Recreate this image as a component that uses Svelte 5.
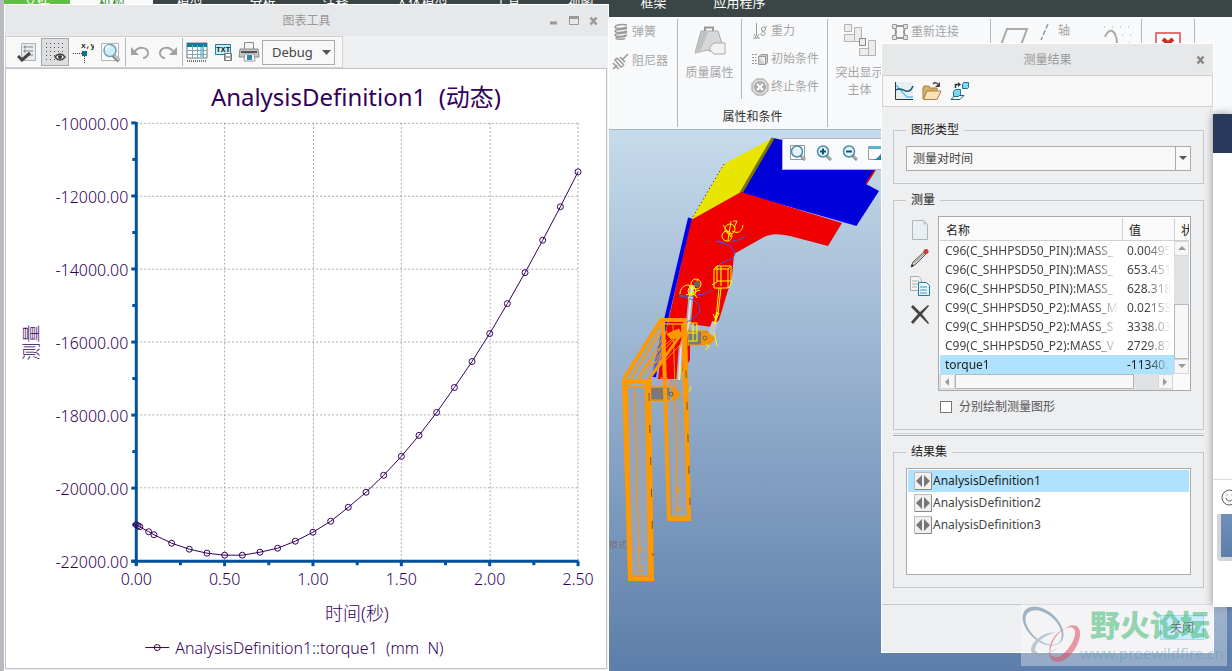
<script>
  const tabs = ['文件', '机构', '模型', '分析', '注释', '人体模型', '工具', '视图', '框架', '应用程序'];

  // time (s), torque (mm N)
  const points = [
    [0, -21002], [0.01, -21030], [0.02, -21057], [0.07, -21194], [0.1, -21276],
    [0.2, -21508], [0.3, -21672], [0.4, -21781], [0.5, -21836], [0.6, -21836],
    [0.7, -21754], [0.8, -21645], [0.9, -21453], [1.0, -21207], [1.1, -20907],
    [1.2, -20524], [1.3, -20114], [1.4, -19649], [1.5, -19130], [1.6, -18556],
    [1.7, -17927], [1.8, -17244], [1.9, -16533], [2.0, -15768], [2.1, -14948],
    [2.2, -14100], [2.3, -13212], [2.4, -12296], [2.5, -11340]
  ];

  const xTicks = [0, 0.5, 1, 1.5, 2, 2.5];
  const yTicks = [-10000, -12000, -14000, -16000, -18000, -20000, -22000];

  const px = (t) => 130 + t * 177;
  const py = (v) => 54 + ((-10000 - v) / 12000) * 439;

  const line = points.map(([t, v]) => `${px(t).toFixed(1)},${py(v).toFixed(1)}`).join(' ');

  const measures = [
    { name: 'C96(C_SHHPSD50_PIN):MASS_', value: '0.00495' },
    { name: 'C96(C_SHHPSD50_PIN):MASS_', value: '653.451' },
    { name: 'C96(C_SHHPSD50_PIN):MASS_', value: '628.318' },
    { name: 'C99(C_SHHPSD50_P2):MASS_M', value: '0.02153' },
    { name: 'C99(C_SHHPSD50_P2):MASS_S', value: '3338.03' },
    { name: 'C99(C_SHHPSD50_P2):MASS_V', value: '2729.87' },
    { name: 'torque1', value: '-11340.' }
  ];
  let activeMeasure = $state(6);

  const results = ['AnalysisDefinition1', 'AnalysisDefinition2', 'AnalysisDefinition3'];
  let activeResult = $state('AnalysisDefinition1');

  let separate = $state(false);
</script>

{#snippet lens(sign)}
  <svg width="20" height="20" viewBox="0 0 20 20" fill="none">
    {#if sign === 'fit'}<path d="M2.500 1.500h14v14h-14z" fill="#fff" stroke="#999" />{/if}
    <path d="M12.500 11.500l4.500 4.500" stroke="#888" stroke-width="3" />
    <path d="M13.500 12l4 4" stroke="#ddd" />
    <circle cx="9" cy="7.500" r="5.500" fill="#e4f4fa" stroke="#4c8da5" stroke-width="1.500" />
    {#if sign === 'in' || sign === 'out'}<path d="M6 7.500h6" stroke="#0b5873" stroke-width="2" />{/if}
    {#if sign === 'in'}<path d="M9 4.500v6" stroke="#0b5873" stroke-width="2" />{/if}
  </svg>
{/snippet}

<div class="desktop">
  <nav class="tabs">
    {#each tabs as tab, i}
      <a href="#tab{i}" class:file={i === 0} class:current={i === 1} class:wide={tab.length > 2}>{tab}</a>
    {/each}
  </nav>

  <div class="ribbon">
    <div class="group stack first">
      <button>
        <svg width="18" height="18" viewBox="0 0 18 18" fill="none" stroke="#999" stroke-width="1.500">
          <path d="M15 2C10 .8 3 2 3 4s8 2 12 0M15 5.500C10 7 3 6 3 8s8 2 12 0M15 9.500C10 11 3 10 3 12s8 2 12 0M14 13C10 14.500 4 13.500 4 15.500c1 1 6 1 9 0" />
        </svg>
        弹簧
      </button>
      <button>
        <svg width="18" height="18" viewBox="0 0 18 18" fill="none" stroke="#999" stroke-width="1.500">
          <path d="M10 8l6-6M5 6l7 7M5 6L3 8l6 7 3-2M1 11l6 6M1 17l4-4M8 5l5 5" />
        </svg>
        阻尼器
      </button>
    </div>
    <div class="pair">
      <div class="pair-row">
        <button class="big">
          <svg width="34" height="32" viewBox="0 0 34 32">
            <path d="M12 7V2.500h8V7" fill="none" stroke="#999" stroke-width="2" />
            <path d="M8 6h17l6 19-8 3-9-3-12 3z" fill="#d7d8d9" stroke="#aaa" />
            <path d="M9 7h6L8 25l-6 2z" fill="#bfc0c1" />
            <path d="M17 22l4-4h11v11H21l-4-4z" fill="#f3f3f3" stroke="#aaa" />
          </svg>
          <span>质量属性</span>
        </button>
        <div class="group stack conditions">
          <button>
            <svg width="18" height="18" viewBox="0 0 18 18" fill="none" stroke="#999">
              <path d="M5.500 1v13M2 16h7M3 12l2.500 4L8 12" />
              <circle cx="12.500" cy="7" r="2" /><path d="M11 9.500c4 0 4 4 1 4s-2-2.500-.5-3M14 5.500l2-1" />
            </svg>
            重力
          </button>
          <button>
            <svg width="18" height="18" viewBox="0 0 18 18" fill="none" stroke="#999">
              <path d="M1 4.500h6M1 7.500h4M1 10.500h5M1 13.500h5" stroke-dasharray="2 1" />
              <path d="M7.500 6.500l3-2h6v8l-2 2h-7z" fill="#ccc" /><path d="M7.500 6.500h7v8" fill="#eee" />
            </svg>
            初始条件
          </button>
          <button>
            <svg width="18" height="18" viewBox="0 0 18 18">
              <path d="M5.500 1h7L17 5.500v7L12.500 17h-7L1 12.500v-7z" fill="#ddd" stroke="#999" />
              <circle cx="9" cy="9" r="6" fill="#aaa" /><path d="M6 6l6 6M12 6l-6 6" stroke="#fff" stroke-width="2" />
            </svg>
            终止条件
          </button>
        </div>
      </div>
      <div class="caption">属性和条件</div>
    </div>
    <button class="big bodies">
      <svg width="34" height="34" viewBox="0 0 34 34" fill="#ececec" stroke="#b2b2b2">
        <path d="M1.500 1.500h7v7h-7zM1.500 11.500h10v7h-10zM11.500 4.500h7v14h-7zM16.500 25.500h9v7h-9zM25.500 17.500h7v15h-7z" />
        <path d="M16.500 15.500h6v7h-6z" stroke="#888" />
      </svg>
      <span>突出显示<br />主体</span>
    </button>
    <div class="group stack reconnect">
      <button>
        <svg width="18" height="18" viewBox="0 0 18 18" fill="#e4e4e4" stroke="#999">
          <path d="M4 3h10l-1 6 1 6H4l1-6z" fill="none" stroke-width="2" />
          <path d="M1.500 1.500h4v4h-4zM12.500 1.500h4v4h-4zM1.500 12.500h4v4h-4zM12.500 12.500h4v4h-4z" />
        </svg>
        重新连接
      </button>
    </div>
    <div class="datum">
      <svg width="30" height="24" viewBox="0 0 30 24" fill="none" stroke="#aaa" stroke-width="2"><path d="M2 22L8 6h20l-6 16z" /></svg>
      <svg width="12" height="18" viewBox="0 0 12 18" stroke="#999" stroke-width="1.500"><path d="M9 1L2 17" stroke-dasharray="5 2" /></svg>
      <span>轴</span>
      <svg class="curve" width="28" height="24" viewBox="0 0 28 24" fill="none" stroke="#aaa" stroke-width="2">
        <path d="M2 14C6 4 13 6 14 20v4" /><path d="M1 4h26M11 12h17M25 20h3" stroke-width="1" stroke-dasharray="1 7" />
      </svg>
    </div>
    <div class="shut">
      <svg width="26" height="26" viewBox="0 0 26 26"><path d="M1 1h24v24H1z" fill="#fff" stroke="#e24444" stroke-width="1.500" /><path d="M8 7l10 9M18 7L8 16" stroke="#c92b2b" stroke-width="4" /></svg>
    </div>
  </div>

  <main class="viewport">
    <svg class="model" width="273" height="541" viewBox="609 130 273 541" fill="none">
      <path d="M773 138L882 160v8l-7 2-9 14 13 7-22 34-116-32z" fill="#0000d8" />
      <path d="M741 192l116 33" stroke="#0000ff" stroke-width="2" />
      <path d="M875 170l-9 14" stroke="#d00" stroke-width="1.500" />
      <path d="M773 138l-49 26-33 56 50-27z" fill="#e8e600" />
      <path d="M724 164l-33 56" stroke="#0000a8" stroke-dasharray="1 3" />
      <path d="M773 138l-32 55" stroke="#7b7700" stroke-width="3" />
      <path d="M691 220l50-28 101 31-14 23-38-10c-12-2-17-3-26 1l-30 17-2 23-13 43-7 7-22-3v36l-13 19h-19l3-25z" fill="#f00000" />
      <path d="M690 218l-24 102-10 45-2 12" stroke="#0000ee" stroke-width="4" />
      <path d="M710 272l-10 30-5 24" stroke="#900" stroke-dasharray="1 4" />
      <path d="M692 285l-4 42-7 22-3 42" stroke="#a9aabc" stroke-width="5" />
      <path d="M692 285l-4 42-7 22-3 42" stroke="#dcdde8" stroke-width="2" />
      <path d="M715 322l-5 14" stroke="#c2c4d2" stroke-width="6" />
      <path d="M650 387h24v14h-24zM688 331h20v14h-20z" fill="#77797c" stroke="#ff9900" />

      <g stroke="#2f62ee">
        <path d="M716 241c10 2 25 0 29-5M716 241c22 5 24 16 10 20-12 4-7 8-5 15M679 295c10 3 27 0 32-5M679 296c25 4 28 17 6 27" />
      </g>
      <g stroke="#ffff00">
        <circle cx="730" cy="229" r="5" /><circle cx="727" cy="236" r="5" /><path d="M723 225l8 12M733 221h4l-3 7M743 225c-1 7-5 9-11 6M728 240l3-19" />
        <path d="M714 269h14v19h-14zM714 269l3-3h14l-3 3M731 266v19l-3 3M717 266v16l-5 3M717 281h14M719 288l-3 31M721 288l-3 26M713 314l3 6 3-7M721 266v20" />
        <circle cx="696" cy="284" r="5" /><circle cx="692" cy="291" r="4" /><path d="M680 294c0-5 3-9 9-9l8 13M700 290l-14 5M688 299l10-20" />
        <path d="M688 323h9v18h-9M688 333h9M693 323v18M714 332l3 14M705 344l4 2-3 4M681 365l-2 21M691 386c-1 7-5 9-12 6" />
        <path d="M717 312l-2 12" stroke-width="2" />
      </g>
      <circle cx="697" cy="284" r="3" fill="#666" />

      <path d="M661 319l-38 60h28l12-16v-43z" fill="#98a3b5" fill-opacity=".6" />
      <g stroke="#ff9900">
        <path d="M661 320l-37 59" stroke-width="4" />
        <path d="M682 333l-33 46" stroke-width="3" />
        <path d="M664 328l-34 51M666 340l-28 38" stroke-width="2" stroke-dasharray="4 1" />
        <path d="M662 324l-30 54M667 331l-30 48M665 351l-25 28M683 342l-28 29M680 333l-24 25M644 366l20-6M660 349l22-18" />
        <path d="M667 334l12-5 2 8-10 2z" fill="#ff9900" />
      </g>
      <path d="M669 380h13l6 136h-16z" fill="#98a3b5" />
      <path d="M626 385h21l3 191h-19z" fill="#98a3b5" />
      <g stroke="#ff9900">
        <path d="M663 320h22l4 199h-20z" stroke-width="4" />
        <path d="M664 378l6 138M682 324l6 192" stroke-width="2" />
        <path d="M624 381h25l3 198h-22z" stroke-width="4" />
        <path d="M626 381l5 195M646 381l4 196" stroke-width="3" />
        <path d="M663 324h22M670 516h18M624 386h25M631 576h20" stroke-width="1.500" />
        <path d="M673 325l3 95 2 96M635 385l2 100 3 90M650 387h25v13h-25" />
        <path d="M628 390c0-10 16-10 16 0M641 378l5 8M660 378h7l5 8-4 12" />
        <circle cx="678" cy="490" r="2" /><circle cx="678" cy="509" r="2" /><circle cx="640" cy="549" r="2" /><circle cx="641" cy="569" r="2" />
      </g>
      <path d="M701 331l8 2 6 5-4 6-10 1zM672 388l6 2 2 4-2 5-6 1z" fill="#f79200" />
      <circle cx="705" cy="338" r="2" stroke="#666" /><circle cx="671" cy="394" r="2" stroke="#555" />
      <path d="M686 370l4 135M649 393l4 163" stroke="#665b42" stroke-dasharray="8 24" />
    </svg>
    <span class="mode">模式</span>
    <div class="view-tools">
      <button aria-label="重新调整">{@render lens('fit')}</button>
      <button aria-label="放大">{@render lens('in')}</button>
      <button aria-label="缩小">{@render lens('out')}</button>
      <button aria-label="重画">
        <svg width="20" height="20" viewBox="0 0 20 20"><path d="M2.500 2.500h15v13h-15z" fill="#fff" stroke="#999" /><path d="M3 2h14v3H3z" fill="#58b4cc" /><path d="M7 16c4-1 8-5 10-10v10z" fill="#2687a6" /></svg>
      </button>
    </div>
  </main>

  <section class="window chart-window">
    <header class="titlebar">
      <span>图表工具</span>
      <div class="controls">
        <button aria-label="最小化"><svg width="10" height="10" viewBox="0 0 10 10"><path d="M1 7h7" stroke="#999" stroke-width="3" /></svg></button>
        <button aria-label="最大化"><svg width="10" height="10" viewBox="0 0 10 10"><path d="M0 1.500h10" stroke="#999" stroke-width="3" /><path d="M.5 1.500h9v7h-9z" fill="none" stroke="#999" /></svg></button>
        <button aria-label="关闭窗口"><svg width="10" height="10" viewBox="0 0 10 10"><path d="M1.500 1.500l6 7M7.500 1.500l-6 7" stroke="#999" stroke-width="2.500" /></svg></button>
      </div>
    </header>
    <div class="toolbar">
      <button aria-label="格式">
        <svg width="20" height="20" viewBox="0 0 20 20" fill="none"><path d="M4.500 1.500h14v17h-14z" fill="#e4eaee" stroke="#adb3b8" /><circle cx="8" cy="5" r="1" stroke="#777" /><circle cx="8" cy="9" r="1" stroke="#777" /><path d="M10 5h6M10 9h6M11 13h5" stroke="#888" /><path d="M1 14l4 4 8-7" stroke="#444" stroke-width="3" /></svg>
      </button>
      <button class="pressed" aria-label="网格">
        <svg width="22" height="22" viewBox="0 0 22 22" fill="none"><path d="M2 2.500h18M2 6.500h18M2 10.500h18M2 14.500h9M2 18.500h9" stroke="#555" stroke-dasharray="1 3" /><path d="M11 16c3-4 7-4 10 0-3 4-7 4-10 0z" fill="#fff" stroke="#444" stroke-width="1.500" /><circle cx="16" cy="16" r="2" fill="#333" /></svg>
      </button>
      <button aria-label="坐标">
        <svg width="22" height="22" viewBox="0 0 22 22"><path d="M1 12.500h9M12.500 15v7" stroke="#333" stroke-dasharray="1 1" /><path d="M10 10h5v5h-5z" fill="#11708e" /><text x="9" y="7">x,y</text></svg>
      </button>
      <button aria-label="缩放">
        <svg width="22" height="22" viewBox="0 0 22 22"><path d="M1.500 2.500h17v17h-17z" fill="#fafafa" stroke="#b5b5b5" /><path d="M13 14l6 6" stroke="#888" stroke-width="4" /><path d="M14 14l5 5" stroke="#ddd" stroke-width="1.500" /><circle cx="10" cy="9.500" r="6" fill="#ccedf8" stroke="#6d9eb0" stroke-width="1.500" /><path d="M6 9c0-3 2-4 4-4" fill="none" stroke="#fff" stroke-width="2" /></svg>
      </button>
      <i></i>
      <button aria-label="撤消">
        <svg width="20" height="20" viewBox="0 0 20 20" fill="none"><path d="M4 11c4-8 15-6 14 1-1 3-3 4-5 4" stroke="#a2a2a2" stroke-width="2" /><path d="M1 5v8h8z" fill="#a2a2a2" /></svg>
      </button>
      <button aria-label="重做">
        <svg width="20" height="20" viewBox="0 0 20 20" fill="none"><path d="M16 11C12 3 1 5 2 12c1 3 3 4 5 4" stroke="#a2a2a2" stroke-width="2" /><path d="M19 5v8h-8z" fill="#a2a2a2" /></svg>
      </button>
      <i></i>
      <button class="narrow" aria-label="表">
        <svg width="22" height="22" viewBox="0 0 22 22" fill="none"><path d="M1 2h20v15H1z" fill="#fff" stroke="#777" /><path d="M1 2h20v4H1z" fill="#147a9b" /><path d="M14 6h4v11h-4z" fill="#83d4ed" /><path d="M1 9.500h20M1 13.500h20M6.500 4v13M11.500 4v13M17.500 4v13" stroke="#83a3af" /><path d="M1 20h20" stroke="#777" stroke-width="2" stroke-dasharray="1 1" /></svg>
      </button>
      <button class="narrow" aria-label="文本">
        <svg width="20" height="20" viewBox="0 0 20 20"><path d="M2.500 2.500h15v10h-15z" fill="#c3edfa" stroke="#237f99" /><text x="3" y="10">TXT</text><path d="M11.500 11.500h7v7h-7z" fill="#aaa" stroke="#777" /><path d="M13 12h4v2h-4zM13 16h4v2h-4z" fill="#fff" /></svg>
      </button>
      <button class="narrow" aria-label="打印">
        <svg width="22" height="22" viewBox="0 0 22 22"><path d="M6.500 1.500h9v7h-9z" fill="#f5f5f5" stroke="#888" /><path d="M2 8h18l1 8H1z" fill="#c4c8cb" stroke="#888" /><path d="M3 11h16" stroke="#555" stroke-width="2" /><path d="M7 13h9l1 7H6z" fill="#fff" stroke="#999" /><path d="M9 14h5v5H9z" fill="#3188a8" /></svg>
      </button>
      <div class="drop debug">
        <select aria-label="模式"><option>Debug</option></select>
        <svg width="9" height="6" viewBox="0 0 9 6"><path d="M0 0h9L4.500 5z" fill="#555" /></svg>
      </div>
    </div>

    <div class="plot">
      <svg viewBox="0 0 600 600" role="img" aria-label="AnalysisDefinition1 (动态)">
        <text class="title" x="350" y="37">AnalysisDefinition1&nbsp; (动态)</text>

        <g class="grid">
          {#each yTicks.slice(0, -1) as v}<line x1="130" x2="573" y1={Math.floor(py(v)) + 0.5} y2={Math.floor(py(v)) + 0.5} />{/each}
          {#each xTicks.slice(1) as t}<line x1={Math.floor(px(t)) + 0.5} x2={Math.floor(px(t)) + 0.5} y1="54" y2="493" />{/each}
        </g>

        <g class="axis">
          <path d="M130 53v444M125 493h448" />
          {#each yTicks as v}<line x1="125" x2="130" y1={py(v)} y2={py(v)} />{/each}
          {#each yTicks.slice(1) as v}<line x1="126" x2="130" y1={py(v + 1000)} y2={py(v + 1000)} />{/each}
          {#each xTicks as t}<line x1={px(t)} x2={px(t)} y1="493" y2="498" />{/each}
          {#each xTicks.slice(1) as t}<line x1={px(t - 0.25)} x2={px(t - 0.25)} y1="493" y2="497" />{/each}
        </g>

        {#each yTicks as v}<text class="label end" x="122" y={py(v) + 7}>{v.toFixed(2)}</text>{/each}
        {#each xTicks as t}<text class="label" x={px(t)} y="517">{t.toFixed(2)}</text>{/each}

        <polyline class="curve" points={line} />
        {#each points as [t, v]}<circle class="curve" cx={px(t)} cy={py(v)} r="3" />{/each}

        <text class="name" x="351" y="552">时间(秒)</text>
        <text class="name" x="-274" y="32" transform="rotate(-90)">测量</text>

        <path class="curve" d="M139 579.500h24" /><circle class="curve" cx="151" cy="579.500" r="3" />
        <text class="label start" x="169" y="586">AnalysisDefinition1::torque1&nbsp; (mm&nbsp; N)</text>
      </svg>
    </div>
  </section>

  <section class="window dialog">
    <header class="titlebar">
      <span>测量结果</span>
      <div class="controls">
        <button aria-label="关闭对话框"><svg width="10" height="10" viewBox="0 0 10 10"><path d="M1.500 1.500l6 7M7.500 1.500l-6 7" stroke="#888" stroke-width="2.500" /></svg></button>
      </div>
    </header>
    <div class="toolbar">
      <button aria-label="绘制图形">
        <svg width="20" height="20" viewBox="0 0 20 20" fill="none"><path d="M1 1h18v17H1z" fill="#e9eef1" /><path d="M2 4l7 8 4 4h6" stroke="#5cc3ee" stroke-width="1.500" /><path d="M2 9c5-4 9 3 13 1 2-1 3-2 4-5" stroke="#155672" stroke-width="1.500" /><path d="M1.500 1v17.500H19" stroke="#333" /></svg>
      </button>
      <button aria-label="打开">
        <svg width="20" height="20" viewBox="0 0 20 20"><path d="M1 7l1-2h5l1 2h7v11H1z" fill="#d6ad6b" stroke="#a8803f" /><path d="M5 10h14l-4 8.500H1.500z" fill="#fbe3b8" stroke="#a8803f" /><path d="M11 3c2-2 4-1 5 0" fill="none" stroke="#444" stroke-width="1.500" /><path d="M18 1v5h-5z" fill="#444" /></svg>
      </button>
      <button aria-label="捕捉">
        <svg width="20" height="20" viewBox="0 0 20 20"><path d="M1 18.500l4-4h9l-4 4z" fill="#fff" stroke="#1b5d8a" /><path d="M3.500 10.500l2-2h5v5l-2 2h-5zM12.500 3.500l1-2h5v5l-1 1h-5z" fill="#7fd5f0" stroke="#1d7797" /><path d="M5.500 7V3.500H9" fill="none" stroke="#333" stroke-width="1.500" /><path d="M8 1l3 2.500L8 6z" fill="#333" /></svg>
      </button>
    </div>

    <fieldset>
      <legend>图形类型</legend>
      <div class="drop type">
        <select aria-label="图形类型"><option>测量对时间</option></select>
        <svg width="8" height="5" viewBox="0 0 8 5"><path d="M0 0h8L4 4z" fill="#555" /></svg>
      </div>
    </fieldset>

    <fieldset>
      <legend>测量</legend>
      <div class="measures">
        <div class="side">
          <button aria-label="新建"><svg width="20" height="22" viewBox="0 0 20 22"><path d="M2.500 1.500h11l4 4v15h-15z" fill="#e9eff2" stroke="#b0b5b8" /><path d="M13.500 1.500v4h4z" fill="#bfc9ce" /></svg></button>
          <button aria-label="编辑"><svg width="20" height="20" viewBox="0 0 20 20"><path d="M1 19l2-5L14 4l2 2L6 16z" fill="#e8dfd5" stroke="#555" /><path d="M4 15L15 5" stroke="#8f8277" /><circle cx="16" cy="3.500" r="2.500" fill="#c93d3d" /><path d="M1 19l1-3 2 2z" fill="#222" /></svg></button>
          <button aria-label="复制"><svg width="20" height="20" viewBox="0 0 20 20"><path d="M.5.5h8l3 3v11H.5z" fill="#f4f4f4" stroke="#aaa" /><path d="M2 5h7M2 8h7M2 11h5" stroke="#aaa" /><path d="M8.500 6.500h8l3 3v10h-11z" fill="#e7f6fc" stroke="#167ca5" /><path d="M10 11h7M10 14h7M10 17h7" stroke="#3e97ba" /></svg></button>
          <button aria-label="删除"><svg width="20" height="20" viewBox="0 0 20 20" fill="#444"><path d="M1 3l2-2 7 7 8-7 1 1-7 8 7 9-1 1-8-8-7 8-2-2 7-8z" /></svg></button>
        </div>
        <div class="grid-box">
          <table>
            <thead><tr><th class="c-name">名称</th><th class="c-value">值</th><th>状</th></tr></thead>
            <tbody>
              {#each measures as m, i}
                <tr class:active={activeMeasure === i} onclick={() => (activeMeasure = i)}>
                  <td><span>{m.name}</span></td>
                  <td><span>{m.value}</span></td>
                  <td></td>
                </tr>
              {/each}
            </tbody>
          </table>
          <div class="vscroll">
            <b><svg width="8" height="5" viewBox="0 0 8 5"><path d="M0 4l4-4 4 4z" /></svg></b>
            <div class="thumb"></div>
            <b><svg width="8" height="5" viewBox="0 0 8 5"><path d="M0 0h8L4 4z" /></svg></b>
          </div>
          <div class="hscroll">
            <b><svg width="5" height="8" viewBox="0 0 5 8"><path d="M4 0v8L0 4z" /></svg></b>
            <div class="thumb"></div>
            <b><svg width="5" height="8" viewBox="0 0 5 8"><path d="M0 0v8l4-4z" /></svg></b>
          </div>
          <label class="check"><input type="checkbox" bind:checked={separate} />分别绘制测量图形</label>
        </div>
      </div>
    </fieldset>

    <hr />

    <fieldset>
      <legend>结果集</legend>
      <div class="results">
        {#each results as r}
          <button class:active={activeResult === r} onclick={() => (activeResult = r)}>
            <svg width="18" height="18" viewBox="0 0 18 18"><path d="M.5.5h17v17H.5z" fill="#f0f0f0" stroke="#bbb" /><path d="M17.500 1v16.500H1" fill="none" stroke="#888" /><path d="M8 3v12L2 9zM10 3v12l6-6z" fill="#777" /></svg>{r}
          </button>
        {/each}
      </div>
    </fieldset>

    <footer><button>关闭</button></footer>
  </section>

  <aside class="chat">
    <div class="chat-head"></div>
    <div class="chat-log"></div>
    <div class="chat-input">
      <svg width="17" height="17" viewBox="0 0 17 17" fill="none" stroke="#555"><circle cx="8.500" cy="8.500" r="7.500" /><path d="M5 9c1 4 6 4 7 0M6 5.500v1M11 5.500v1" /></svg>
      <div class="thumbnail"></div>
    </div>
  </aside>

  <div class="watermark">
    <svg width="66" height="62" viewBox="0 0 66 62" fill-rule="evenodd">
      <path transform="translate(22 22) rotate(42)" d="M-24 0a24 15 0 0 1 48 0a24 15 0 0 1-48 0zM-20 1a21 12 0 0 0 43 0a21 13 0 0 0-43 0z" fill="#5f7f9a" />
      <path transform="translate(26 41) rotate(-28)" d="M-17 0a17 10 0 0 1 30-7a17 9 0 0 0-26 7a16 8 0 0 0 22 7a17 10 0 0 1-26-7z" fill="#8fa3b5" />
      <path d="M44 25c6-6 16-5 15 6-1 12-12 26-22 27-6 0-9-5-9-10 3 6 8 7 14 2 8-7 13-17 12-23-1-4-5-5-10-2zM45 24c-8 4-15 13-16 25-3-8 6-22 16-25z" fill="#dc4f5e" />
    </svg>
    <div>
      <strong>野火论坛</strong>
      <span>www.proewildfire.cn</span>
    </div>
  </div>
</div>

<style>
  :global(body) {
    margin: 0;
    overflow: hidden;
    font: 12px/16px 'Noto Sans', 'Noto Sans CJK SC', sans-serif;
    color: #444;
  }

  .desktop {
    position: relative;
    height: 100vh;
    overflow: hidden;
    display: flex;
    flex-direction: column;
    box-sizing: border-box;
    border-left: 4px solid #b9babf;
    background: #3c4546;
  }

  button {
    font: inherit;
    color: inherit;
    background: none;
    border: 0;
    padding: 0;
    display: flex;
    align-items: center;
    justify-content: center;
  }

  svg {
    flex: none;
  }

  /* menu tabs */
  .tabs {
    display: flex;
    margin-top: -12px;
    height: 29px;
    flex: none;
  }

  .tabs a {
    width: 73px;
    line-height: 29px;
    text-align: center;
    font-size: 13px;
    color: #fff;
    text-decoration: none;
  }

  .tabs a.file {
    width: 66px;
    background: #5fc044;
  }

  .tabs a.current {
    width: 83px;
    background: #f7f9fb;
    color: #3c8a2d;
  }

  .tabs a.wide {
    width: 99px;
  }

  /* ribbon */
  .ribbon {
    flex: none;
    display: flex;
    height: 113px;
    box-sizing: border-box;
    padding-left: 605px;
    border-bottom: 1px solid #a5b6c4;
    background: #f7f9fb;
    color: #a6a6a6;
  }

  .ribbon > * {
    margin: 2px 0;
    box-sizing: border-box;
    flex: none;
  }

  .stack {
    display: flex;
    flex-direction: column;
    gap: 4px;
  }

  .stack button {
    height: 25px;
    gap: 2px;
    justify-content: flex-start;
  }

  .first {
    width: 69px;
    padding-left: 3px;
    border-right: 1px solid #b4b8bb;
  }

  .pair {
    width: 150px;
    border-right: 1px solid #b4b8bb;
  }

  .pair-row {
    display: flex;
    height: 80px;
  }

  .big {
    flex-direction: column;
    justify-content: flex-start;
    width: 63px;
    gap: 7px;
    padding-top: 6px;
  }

  .big span {
    line-height: 17px;
  }

  .conditions {
    border-left: 1px solid #b4b8bb;
    padding-left: 9px;
    flex: 1;
  }

  .caption {
    text-align: center;
    padding-top: 10px;
    color: #333;
  }

  .bodies {
    padding-top: 4px;
  }

  .reconnect {
    width: 100px;
    border-right: 1px solid #b4b8bb;
  }

  .datum {
    display: flex;
    width: 151px;
    padding: 4px 0 0 8px;
    border-right: 1px solid #b4b8bb;
    align-items: flex-start;
  }

  .datum svg:nth-child(2) {
    margin: 0 7px 0 10px;
  }

  .datum .curve {
    margin-left: 33px;
  }

  .shut {
    width: 53px;
    padding: 13px 0 0 13px;
    border-right: 1px solid #b4b8bb;
  }

  /* 3d view */
  .viewport {
    position: relative;
    flex: 1;
    min-height: 0;
    overflow: hidden;
    padding-left: 605px;
    background: linear-gradient(#c6dbeb, #5d7daa);
  }

  .mode {
    position: absolute;
    left: 605px;
    top: 407px;
    font-size: 9px;
    color: #777;
  }

  .view-tools {
    position: absolute;
    left: 778px;
    top: 8px;
    display: flex;
    gap: 6px;
    padding: 5px;
    border: 1px solid #b4b4b4;
    background: #f8fafc;
  }

  /* floating windows */
  .window {
    position: absolute;
    display: flex;
    flex-direction: column;
    box-sizing: border-box;
    background: #eeeff1;
    border: 1px solid #fff;
  }

  .titlebar {
    position: relative;
    flex: none;
    height: 31px;
    line-height: 32px;
    text-align: center;
    background: #e6e8ea;
    color: #999;
  }

  .controls {
    position: absolute;
    right: 9px;
    top: 11px;
    display: flex;
    gap: 10px;
  }

  .dialog .controls {
    right: 7px;
  }

  .toolbar {
    display: flex;
    align-items: center;
    height: 32px;
    box-sizing: border-box;
    border: 1px solid #cfd2d5;
    background: #f8f8f8;
  }

  .toolbar button {
    width: 28px;
    height: 28px;
  }

  .toolbar text {
    font: bold 8px 'Liberation Mono', monospace;
    fill: #222;
  }

  .toolbar i {
    width: 1px;
    height: 28px;
    background: #b6b8ba;
  }

  .toolbar .pressed {
    box-sizing: border-box;
    border: 1px solid #a6a8aa;
    background: #dcdee0;
  }

  .toolbar .narrow {
    width: 26px;
  }

  .drop {
    position: relative;
  }

  .drop select {
    appearance: none;
    width: 100%;
    height: 25px;
    border: 1px solid #a9abad;
    border-radius: 0;
    background: #f8f8f8;
    font: inherit;
    color: #444;
  }

  .drop svg {
    position: absolute;
    right: 4px;
    top: 10px;
    pointer-events: none;
  }

  .debug {
    width: 73px;
    font-size: 13px;
  }

  .debug select {
    padding: 0 9px;
  }

  .chart-window {
    left: 0;
    top: 4px;
    bottom: 0;
    width: 605px;
  }

  .chart-window .toolbar {
    align-self: flex-start;
    width: 338px;
    padding-left: 7px;
  }

  .chart-window .toolbar i + .narrow {
    margin-left: 1px;
  }

  .plot {
    flex: 1;
    min-height: 0;
    margin: 0 1px 1px 0;
    border: 1px solid #c0c3c8;
    background: #fff;
  }

  .plot svg {
    display: block;
    width: 100%;
    height: 100%;
  }

  .plot text {
    fill: #33005c;
    text-anchor: middle;
    font-weight: 300;
  }

  .plot .title {
    font-size: 24px;
    font-weight: 400;
  }

  .plot .label {
    font-size: 16px;
  }

  .plot .name {
    font-size: 18px;
  }

  .plot .end {
    text-anchor: end;
  }

  .plot .start {
    text-anchor: start;
  }

  .grid line {
    stroke: #aaa;
    stroke-dasharray: 2 2;
  }

  .axis {
    stroke: #00529c;
    stroke-width: 3;
  }

  .plot .curve {
    fill: none;
    stroke: #33005c;
  }

  /* measure results */
  .dialog {
    right: 18px;
    top: 43px;
    width: 333px;
    height: 610px;
  }

  .dialog .toolbar {
    padding-left: 7px;
  }

  fieldset {
    margin: 8px 9px 0 11px;
    padding: 8px 12px 12px;
    border: 1px solid #c3c6ca;
    min-width: 0;
  }

  .toolbar + fieldset {
    margin-top: 15px;
  }

  legend {
    margin-left: 0;
    padding: 0 5px;
    color: #222;
  }

  .type select {
    display: block;
    padding: 0 6px;
  }

  .type::after {
    content: '';
    position: absolute;
    right: 15px;
    top: 0;
    width: 1px;
    height: 25px;
    background: #a9abad;
  }

  .measures {
    display: flex;
  }

  .side {
    width: 32px;
    flex: none;
  }

  .side button {
    width: 28px;
    height: 28px;
  }

  .grid-box {
    position: relative;
    flex: 1;
    min-width: 0;
  }

  table {
    width: 100%;
    table-layout: fixed;
    border-collapse: separate;
    border-spacing: 0;
    border: 1px solid #a6a9ac;
    border-bottom: 0;
    background: #fff;
    padding: 1px 1px 0;
  }

  th {
    height: 23px;
    box-sizing: border-box;
    padding: 3px 6px 0;
    overflow: hidden;
    text-align: left;
    font-weight: 400;
    white-space: nowrap;
    color: #222;
    background: #fafafa;
    border-bottom: 1px solid #cfd2d4;
  }

  th + th {
    border-left: 1px solid #cfd2d4;
  }

  .c-name {
    width: 182px;
  }

  .c-value {
    width: 52px;
  }

  td {
    height: 19px;
    padding: 0 3px 0 5px;
    overflow: hidden;
  }

  td span {
    display: block;
    overflow: hidden;
    white-space: nowrap;
    line-height: 19px;
    mask-image: linear-gradient(to left, transparent, #000 24px);
  }

  .active {
    background: #aee2fe;
    color: #222;
  }

  .vscroll {
    position: absolute;
    right: 2px;
    top: 25px;
    width: 15px;
    height: 133px;
    display: flex;
    flex-direction: column;
    justify-content: space-between;
    background: #dfe1e3;
  }

  .vscroll b,
  .hscroll b {
    width: 15px;
    height: 15px;
    box-sizing: border-box;
    border: 1px solid #d5d7d9;
    background: #f6f6f6;
    display: flex;
    align-items: center;
    justify-content: center;
    fill: #999;
  }

  .thumb {
    box-sizing: border-box;
    border: 1px solid #b5b8ba;
    background: #f7f7f7;
  }

  .vscroll .thumb {
    height: 55px;
    margin-top: auto;
  }

  .hscroll {
    display: flex;
    height: 17px;
    box-sizing: border-box;
    padding: 0 17px 1px 1px;
    border: 1px solid #a6a9ac;
    border-top: 0;
    background: linear-gradient(to right, #dfe1e3 calc(100% - 17px), #fafafa 0);
  }

  .hscroll .thumb {
    width: 179px;
    margin-right: auto;
  }

  .check {
    display: flex;
    align-items: center;
    gap: 7px;
    margin-top: 8px;
    padding-bottom: 2px;
    color: #555;
  }

  .check input {
    appearance: none;
    width: 12px;
    height: 12px;
    margin: 0 0 0 2px;
    border: 1px solid #777;
    background: #fff;
  }

  .check input:checked {
    background: #3188a8;
  }

  hr {
    width: auto;
    height: 1px;
    margin: 3px 9px 0 11px;
    border: 0;
    border-top: 1px solid #d5d8da;
    border-bottom: 1px solid #aeb3b6;
  }

  .results {
    height: 107px;
    box-sizing: border-box;
    padding: 1px;
    border: 1px solid #a9abad;
    background: #fff;
  }

  .results button {
    width: 100%;
    height: 22px;
    padding-left: 6px;
    gap: 1px;
    justify-content: flex-start;
  }

  footer {
    display: flex;
    justify-content: flex-end;
    margin-top: auto;
    height: 48px;
    box-sizing: border-box;
    padding: 10px 9px;
    border-top: 1px solid #c3c6ca;
  }

  footer button {
    width: 44px;
    height: 25px;
    border: 1px solid #6fc8ee;
    background: #aee2fe;
    color: #222;
  }

  /* window peeking in from the right */
  .chat {
    position: absolute;
    right: 0;
    top: 114px;
    width: 19px;
    height: 493px;
    display: flex;
    flex-direction: column;
    background: #fff;
    box-shadow: 0 0 8px #0006;
  }

  .chat-head {
    height: 39px;
    background: #29395b;
  }

  .chat-log {
    height: 326px;
    border-bottom: 1px solid #ddd;
  }

  .chat-input {
    overflow: hidden;
    padding: 9px 0 0 4px;
  }

  .chat-input svg {
    display: block;
    margin-left: 4px;
  }

  .thumbnail {
    width: 40px;
    height: 43px;
    margin-top: 8px;
    border: 4px solid #d3d5d8;
    border-top: 0;
    border-radius: 0 0 4px 4px;
    background: linear-gradient(#7090ba, #5d7daa);
  }

  .watermark {
    position: absolute;
    right: 5px;
    bottom: 5px;
    display: flex;
    width: 206px;
    height: 62px;
    background: #ffffff59;
    pointer-events: none;
  }

  .watermark svg {
    opacity: 0.55;
  }

  .watermark div {
    display: flex;
    flex-direction: column;
    white-space: nowrap;
    margin-left: -7px;
  }

  .watermark strong {
    padding-left: 10px;
    font-size: 30px;
    line-height: 41px;
    font-weight: 900;
    color: #33b26980;
  }

  .watermark span {
    font-size: 15px;
    line-height: 16px;
    color: #5f9fb480;
  }
</style>
